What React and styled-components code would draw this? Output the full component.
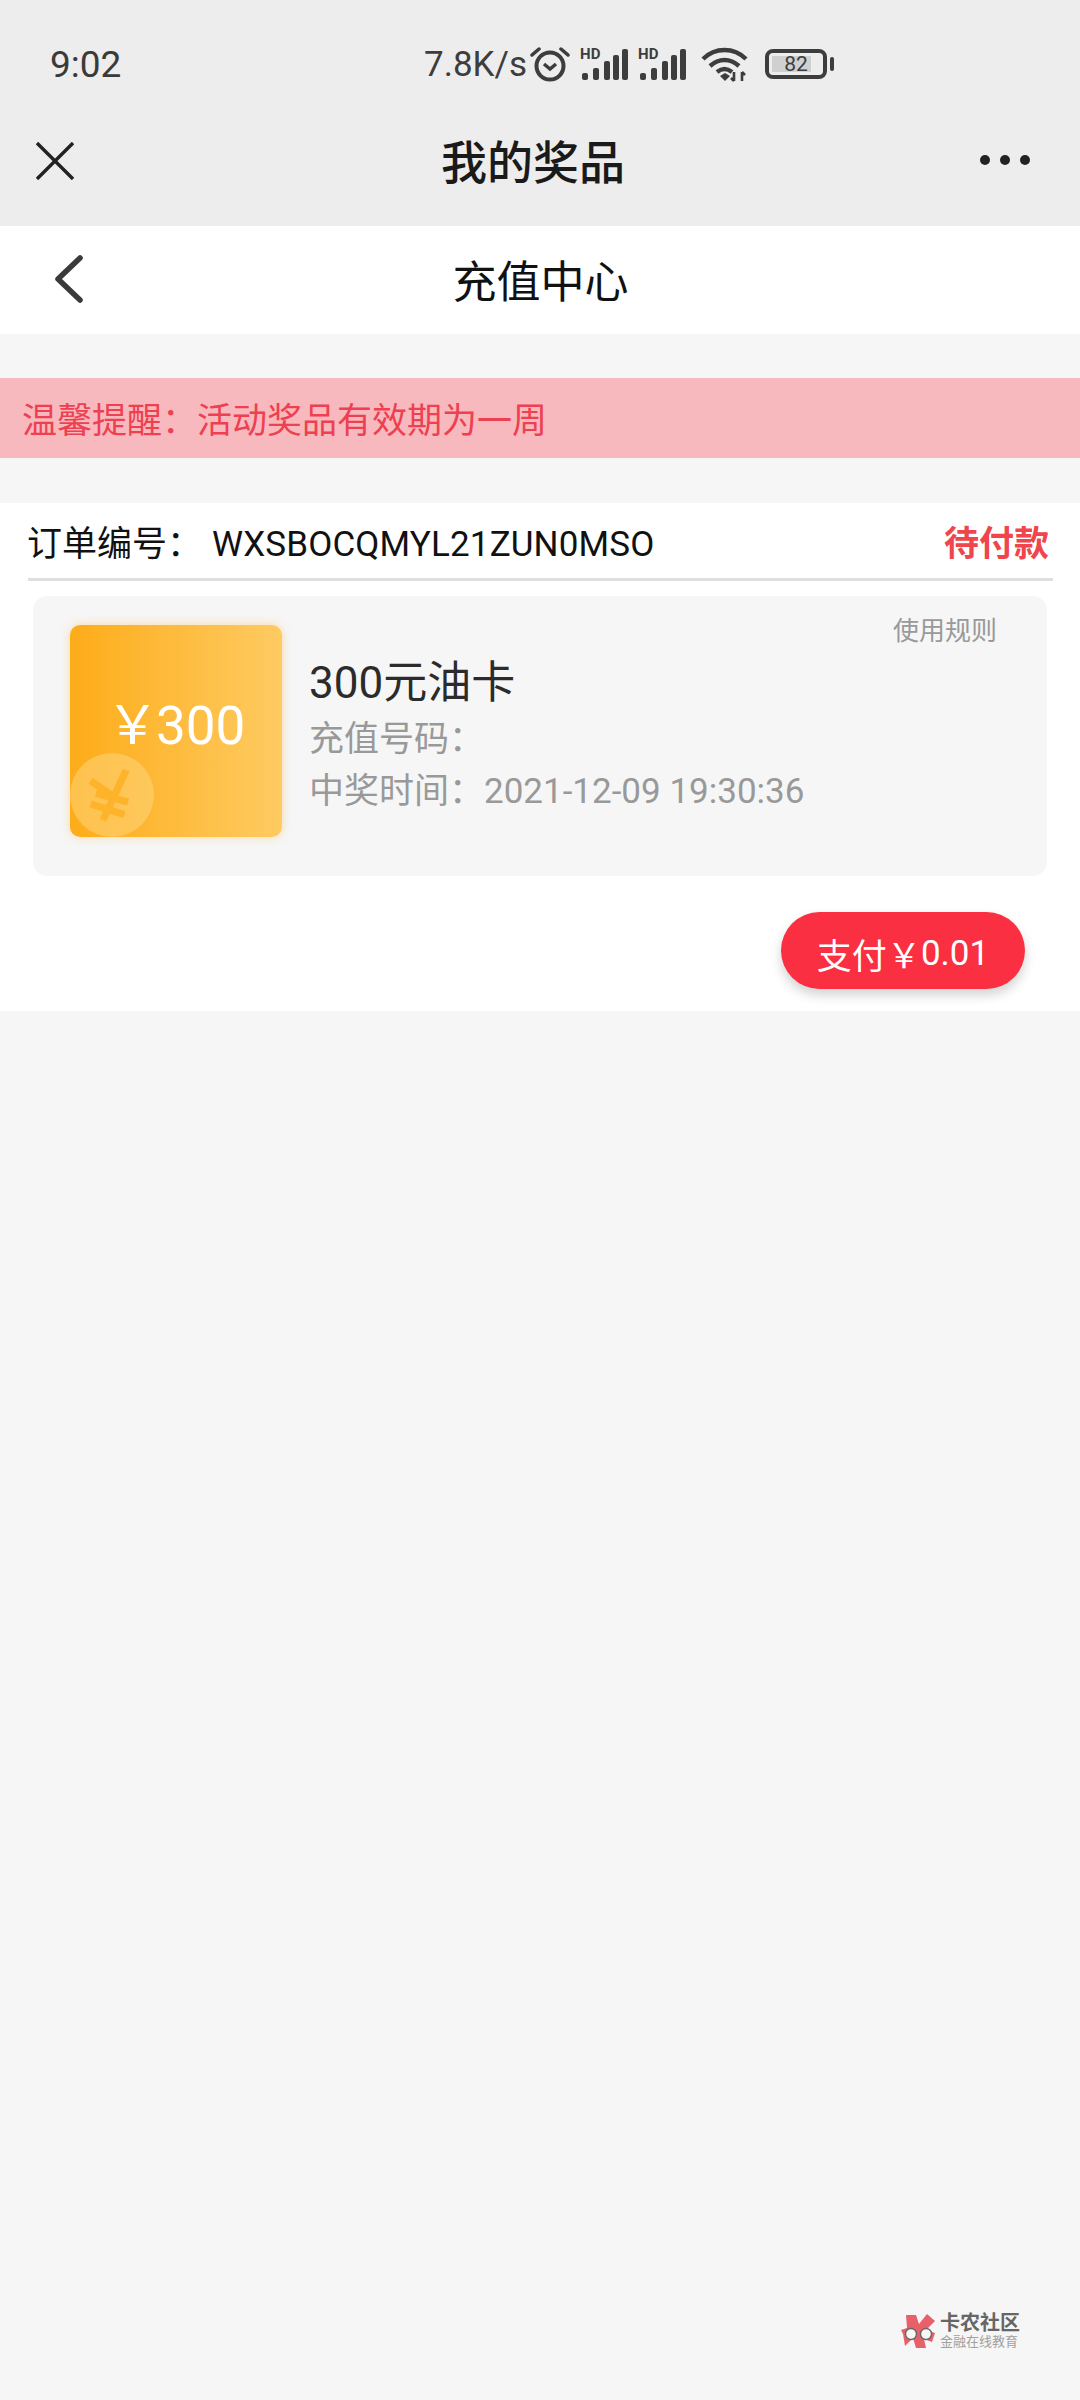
import React from "react";
import styled, { createGlobalStyle } from "styled-components";

const GlobalStyle = createGlobalStyle`
  html, body {
    margin: 0;
    padding: 0;
    background: #f6f6f6;
    font-family: Roboto, "Noto Sans CJK SC", sans-serif;
  }
  * { box-sizing: border-box; }
`;

function AlarmIcon() {
  return (
    <StatusSvg width="40" height="38" viewBox="0 0 40 38" fill="none" stroke="#3d3d3d">
      <circle cx="20" cy="21" r="13.5" strokeWidth="4" />
      <path d="M14 19l6 5 6-5" strokeWidth="3.5" />
      <path d="M2 10l7-6M38 10l-7-6" strokeWidth="3.5" strokeLinecap="round" />
    </StatusSvg>
  );
}

function SignalIcon() {
  return (
    <SignalWrap>
      <HdLabel>HD</HdLabel>
      <StatusSvg width="48" height="32" viewBox="0 0 48 32" fill="#3d3d3d">
        <rect x="2" y="25" width="6" height="7" rx="2" />
        <rect x="13" y="20" width="6" height="12" rx="2" />
        <rect x="24" y="13" width="6" height="19" rx="2" />
        <rect x="33" y="7" width="6" height="25" rx="2" />
        <rect x="42" y="1" width="6" height="31" rx="2" />
      </StatusSvg>
    </SignalWrap>
  );
}

function WifiIcon() {
  return (
    <WifiSvg width="48" height="36" viewBox="0 0 48 36" fill="none" stroke="#3d3d3d" strokeWidth="4.4">
      <path d="M2 13C14 1 33 1 45 13" />
      <path d="M9 20c9-8 20-8 29 0" />
      <path d="M16 26c5-4 10-4 15 0" />
      <path d="M19 30l5-3 5 3-5 5z" fill="#3d3d3d" stroke="none" />
      <path d="M33 26v9M30 32l3 3M41 35v-9M41 26l3 3" strokeWidth="2.6" />
    </WifiSvg>
  );
}

function CoinMark() {
  return (
    <Coin>
      <svg width="50" height="58" viewBox="0 0 56 60" fill="none" stroke="#fdb32a" strokeWidth="8">
        <path d="M4 14l26 18M44 2L30 32 18 58" />
        <path d="M10 28l36 10M4 40l38 12" />
      </svg>
    </Coin>
  );
}

function WatermarkLogo() {
  return (
    <svg width="36" height="36" viewBox="0 0 36 36">
      <path d="M5 2h10l3 9 8-10 8 7-9 9 9 3-3 9-8-3 2 9-10 0-3-10-8 8-2-12-2-4 6-2z" fill="#e8616a" />
      <circle cx="10" cy="21" r="5.5" fill="#f7f7f7" stroke="#666" strokeWidth="1.4" />
      <circle cx="25" cy="21" r="5.5" fill="#f7f7f7" stroke="#666" strokeWidth="1.4" />
    </svg>
  );
}

export default function App() {
  return (
    <>
      <GlobalStyle />
      <Page>
        <TopBar>
          <StatusBar>
            <Time>9:02</Time>
            <StatusIcons>
              <Speed>7.8K/s</Speed>
              <AlarmIcon />
              <SignalIcon />
              <SignalIcon />
              <WifiIcon />
              <Battery>
                <BatteryLevel>82</BatteryLevel>
                <BatteryCap />
              </Battery>
            </StatusIcons>
          </StatusBar>
          <NavBar>
            <svg width="38" height="38" viewBox="0 0 38 38" stroke="#222" strokeWidth="3.4" fill="none">
              <path d="M1 1l36 36M37 1L1 37" />
            </svg>
            <NavTitle>我的奖品</NavTitle>
            <MoreDots>
              <i />
              <i />
              <i />
            </MoreDots>
          </NavBar>
        </TopBar>

        <Header>
          <BackButton>
            <svg width="30" height="48" viewBox="0 0 30 48" stroke="#3a3a3a" strokeWidth="5.5" fill="none" strokeLinecap="round" strokeLinejoin="round">
              <path d="M26 3L4 24l22 21" />
            </svg>
          </BackButton>
          <HeaderTitle>充值中心</HeaderTitle>
        </Header>

        <Notice>温馨提醒：活动奖品有效期为一周</Notice>

        <OrderCard>
          <OrderRow>
            <OrderNo>
              订单编号：<OrderCode>WXSBOCQMYL21ZUN0MSO</OrderCode>
            </OrderNo>
            <OrderStatus>待付款</OrderStatus>
          </OrderRow>
          <Prize>
            <Voucher>
              <VoucherAmount>
                <span>￥</span>300
              </VoucherAmount>
              <CoinMark />
            </Voucher>
            <PrizeInfo>
              <PrizeName>300元油卡</PrizeName>
              <PrizeMeta>充值号码：</PrizeMeta>
              <PrizeMeta>中奖时间：2021-12-09 19:30:36</PrizeMeta>
            </PrizeInfo>
            <RulesLink>使用规则</RulesLink>
          </Prize>
          <Actions>
            <PayButton>
              <PayLabel>
                支付<span>￥</span>0.01
              </PayLabel>
            </PayButton>
          </Actions>
        </OrderCard>

        <Watermark>
          <WatermarkLogo />
          <WatermarkText>
            <strong>卡农社区</strong>
            <small>金融在线教育</small>
          </WatermarkText>
        </Watermark>
      </Page>
    </>
  );
}

const Page = styled.div`
  position: relative;
  width: 1080px;
  height: 2400px;
  background: #f6f6f6;
  overflow: hidden;
`;

const TopBar = styled.div`
  height: 226px;
  padding-top: 44px;
  background: #ededed;
`;

const StatusBar = styled.div`
  display: flex;
  align-items: center;
  height: 40px;
  padding-left: 50px;
`;

const Time = styled.div`
  width: 374px;
  font-size: 37px;
  color: #3a3a3a;
`;

const StatusIcons = styled.div`
  display: flex;
  align-items: center;
`;

const Speed = styled.div`
  font-size: 35px;
  color: #3d3d3d;
  margin-right: 3px;
`;

const StatusSvg = styled.svg`
  display: block;
  flex: none;
`;

const WifiSvg = styled(StatusSvg)`
  margin-left: 15px;
`;

const SignalWrap = styled.div`
  position: relative;
  width: 48px;
  height: 32px;
  margin-left: 10px;
`;

const HdLabel = styled.span`
  position: absolute;
  left: 0;
  top: -1px;
  font-size: 15px;
  font-weight: 700;
  line-height: 14px;
  color: #3d3d3d;
`;

const Battery = styled.div`
  position: relative;
  width: 62px;
  height: 30px;
  margin-left: 16px;
  border: 4px solid #3d3d3d;
  border-radius: 8px;
  padding: 3px;
`;

const BatteryLevel = styled.div`
  height: 16px;
  background: linear-gradient(90deg, #d0d0d0 82%, transparent 82%);
  font-size: 21px;
  line-height: 16px;
  color: #3d3d3d;
  text-align: center;
`;

const BatteryCap = styled.div`
  position: absolute;
  right: -11px;
  top: 4px;
  width: 4px;
  height: 14px;
  border-radius: 2px;
  background: #3d3d3d;
`;

const NavBar = styled.div`
  display: grid;
  grid-template-columns: 1fr auto 1fr;
  align-items: center;
  height: 142px;
  padding: 12px 50px 0 36px;
`;

const NavTitle = styled.div`
  font-size: 46px;
  font-weight: 500;
  color: #1a1a1a;
  margin-top: -4px;
`;

const MoreDots = styled.div`
  display: flex;
  justify-content: flex-end;
  gap: 10px;
  margin-top: -2px;
  i {
    display: block;
    width: 10px;
    height: 10px;
    border-radius: 50%;
    background: #222;
  }
`;

const Header = styled.div`
  position: relative;
  display: flex;
  align-items: center;
  justify-content: center;
  height: 108px;
  background: #fff;
`;

const BackButton = styled.div`
  position: absolute;
  left: 54px;
  top: 29px;
`;

const HeaderTitle = styled.div`
  font-size: 44px;
  color: #111;
  margin-top: -2px;
  margin-left: 1px;
`;

const Notice = styled.div`
  height: 80px;
  margin-top: 44px;
  padding: 4px 0 0 22px;
  background: #f7b8be;
  font-size: 35px;
  line-height: 80px;
  color: #ee4050;
`;

const OrderCard = styled.div`
  margin-top: 45px;
  padding-bottom: 22px;
  background: #fff;
`;

const OrderRow = styled.div`
  display: flex;
  align-items: center;
  justify-content: space-between;
  height: 78px;
  margin: 0 27px 0 28px;
  border-bottom: 3px solid #dfdfdf;
  padding-right: 4px;
`;

const OrderNo = styled.div`
  font-size: 35px;
  color: #111;
  margin-left: -1px;
`;

const OrderCode = styled.span`
  margin-left: 10px;
  letter-spacing: 0.15px;
`;

const OrderStatus = styled.div`
  font-size: 35px;
  font-weight: 700;
  color: #f0454c;
`;

const Prize = styled.div`
  position: relative;
  display: flex;
  align-items: flex-start;
  height: 280px;
  margin: 15px 33px 0;
  padding: 29px 37px;
  background: #f6f6f6;
  border-radius: 14px;
`;

const Voucher = styled.div`
  position: relative;
  flex: none;
  width: 212px;
  height: 212px;
  border-radius: 10px;
  background: linear-gradient(90deg, #fdac19, #fecb62);
  box-shadow: 0 0 8px rgba(253, 190, 80, 0.5);
  overflow: hidden;
`;

const VoucherAmount = styled.div`
  position: absolute;
  left: 40px;
  top: 68px;
  display: flex;
  align-items: center;
  font-size: 53px;
  line-height: 66px;
  color: #fff;
  span {
    width: 50px;
    margin-left: -4px;
  }
`;

const Coin = styled.div`
  position: absolute;
  left: 0;
  bottom: 0;
  display: flex;
  align-items: center;
  justify-content: center;
  width: 84px;
  height: 84px;
  border-radius: 50%;
  background: rgba(255, 216, 130, 0.5);
`;

const PrizeInfo = styled.div`
  margin-left: 27px;
  padding-top: 27px;
`;

const PrizeName = styled.div`
  font-size: 44px;
  line-height: 62px;
  color: #2b2b2b;
`;

const PrizeMeta = styled.div`
  font-size: 35px;
  line-height: 52px;
  color: #999;
`;

const RulesLink = styled.div`
  position: absolute;
  right: 50px;
  top: 17px;
  font-size: 26px;
  line-height: 36px;
  color: #999;
`;

const Actions = styled.div`
  display: flex;
  justify-content: flex-end;
  padding: 36px 55px 0 0;
`;

const PayButton = styled.div`
  display: flex;
  align-items: center;
  justify-content: center;
  width: 244px;
  height: 77px;
  padding-top: 5px;
  border-radius: 39px;
  background: #fa2f42;
  box-shadow: 0 6px 12px rgba(0, 0, 0, 0.18);
`;

const PayLabel = styled.div`
  display: flex;
  align-items: center;
  font-size: 35px;
  color: #fff;
  span {
    width: 34px;
    font-size: 34px;
  }
`;

const Watermark = styled.div`
  position: absolute;
  left: 901px;
  top: 2312px;
  display: flex;
  align-items: center;
  gap: 3px;
`;

const WatermarkText = styled.div`
  display: flex;
  flex-direction: column;
  strong {
    font-size: 20px;
    line-height: 22px;
    color: #666;
  }
  small {
    font-size: 13px;
    line-height: 16px;
    color: #a0a0a0;
  }
`;
